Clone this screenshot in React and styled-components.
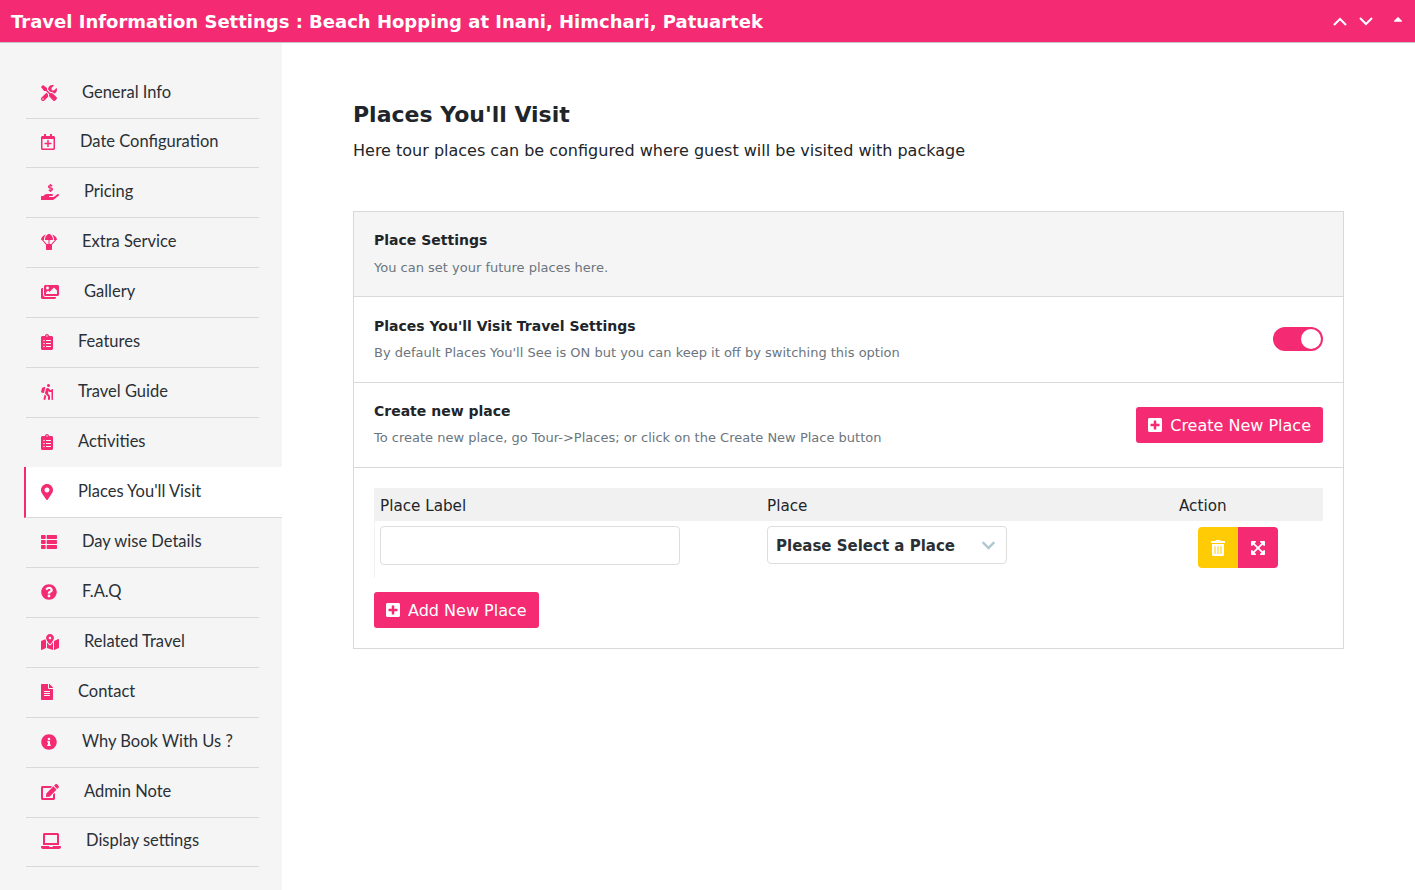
import React from "react";
import styled, { createGlobalStyle } from "styled-components";
import {
  FaTools,
  FaRegCalendarPlus,
  FaHandHoldingUsd,
  FaParachuteBox,
  FaImages,
  FaClipboardList,
  FaHiking,
  FaMapMarkerAlt,
  FaThList,
  FaQuestionCircle,
  FaMapMarkedAlt,
  FaFileAlt,
  FaInfoCircle,
  FaEdit,
  FaLaptop,
  FaPlusSquare,
  FaTrashAlt,
  FaExpandArrowsAlt,
  FaChevronDown,
  FaCaretUp,
} from "react-icons/fa";

const menu = [
  { label: "General Info", icon: FaTools, width: 16 },
  { label: "Date Configuration", icon: FaRegCalendarPlus, width: 14, short: true },
  { label: "Pricing", icon: FaHandHoldingUsd, width: 18 },
  { label: "Extra Service", icon: FaParachuteBox, width: 16 },
  { label: "Gallery", icon: FaImages, width: 18 },
  { label: "Features", icon: FaClipboardList, width: 12 },
  { label: "Travel Guide", icon: FaHiking, width: 12 },
  { label: "Activities", icon: FaClipboardList, width: 12 },
  { label: "Places You'll Visit", icon: FaMapMarkerAlt, width: 12, active: true },
  { label: "Day wise Details", icon: FaThList, width: 16 },
  { label: "F.A.Q", icon: FaQuestionCircle, width: 16 },
  { label: "Related Travel", icon: FaMapMarkedAlt, width: 18 },
  { label: "Contact", icon: FaFileAlt, width: 12 },
  { label: "Why Book With Us ?", icon: FaInfoCircle, width: 16 },
  { label: "Admin Note", icon: FaEdit, width: 18 },
  { label: "Display settings", icon: FaLaptop, width: 20, short: true },
];

function Chevron({ up }) {
  return (
    <svg width="14" height="9" viewBox="0 0 14 9">
      <polyline
        points={up ? "1,8 7,2 13,8" : "1,1 7,7 13,1"}
        fill="none"
        stroke="#fff"
        strokeWidth="2"
      />
    </svg>
  );
}

function App() {
  return (
    <>
      <GlobalStyle />
      <Header>
        <HeaderTitle>
          Travel Information Settings : Beach Hopping at Inani, Himchari, Patuartek
        </HeaderTitle>
        <HeaderActions>
          <Chevron up />
          <Chevron />
          <CaretWrap>
            <FaCaretUp />
          </CaretWrap>
        </HeaderActions>
      </Header>
      <Body>
        <Sidebar>
          {menu.map((item) => {
            const Icon = item.icon;
            return (
              <MenuItem key={item.label} $active={item.active} $short={item.short}>
                <MenuIcon $width={item.width}>
                  <Icon />
                </MenuIcon>
                {item.label}
              </MenuItem>
            );
          })}
        </Sidebar>
        <Main>
          <Title>Places You'll Visit</Title>
          <Subtitle>
            Here tour places can be configured where guest will be visited with package
          </Subtitle>
          <Card>
            <CardHead>
              <RowTitle>Place Settings</RowTitle>
              <RowText>You can set your future places here.</RowText>
            </CardHead>
            <CardRow>
              <div>
                <RowTitle>Places You'll Visit Travel Settings</RowTitle>
                <RowText>
                  By default Places You'll See is ON but you can keep it off by switching this
                  option
                </RowText>
              </div>
              <Toggle>
                <Knob />
              </Toggle>
            </CardRow>
            <CardRow>
              <RowCopy>
                <RowTitle>Create new place</RowTitle>
                <RowText>
                  To create new place, go Tour-&gt;Places; or click on the Create New Place button
                </RowText>
              </RowCopy>
              <PinkButton>
                <FaPlusSquare />
                Create New Place
              </PinkButton>
            </CardRow>
            <TableSection>
              <TableHead>
                <HeadCell>Place Label</HeadCell>
                <HeadCell>Place</HeadCell>
                <HeadCell>Action</HeadCell>
              </TableHead>
              <TableRow>
                <LabelCell>
                  <TextInput />
                </LabelCell>
                <PlaceCell>
                  <SelectBox>
                    Please Select a Place
                    <FaChevronDown />
                  </SelectBox>
                </PlaceCell>
                <ActionCell>
                  <DeleteButton>
                    <FaTrashAlt />
                  </DeleteButton>
                  <ExpandButton>
                    <FaExpandArrowsAlt />
                  </ExpandButton>
                </ActionCell>
              </TableRow>
              <PinkButton>
                <FaPlusSquare />
                Add New Place
              </PinkButton>
            </TableSection>
          </Card>
        </Main>
      </Body>
    </>
  );
}

const pink = "#f42a72";

const GlobalStyle = createGlobalStyle`
  body {
    margin: 0;
    font-family: "DejaVu Sans", sans-serif;
    color: #212529;
    background: #fff;
  }
`;

const Header = styled.div`
  height: 42px;
  background: ${pink};
  border-bottom: 1px solid #c4c4c4;
  display: flex;
  align-items: center;
  justify-content: space-between;
  padding: 0 10px 0 11px;
`;

const HeaderTitle = styled.div`
  color: #fff;
  font-size: 18px;
  font-weight: 700;
`;

const HeaderActions = styled.div`
  display: flex;
  align-items: center;
  gap: 12px;
`;

const CaretWrap = styled.span`
  display: flex;
  color: #fff;
  font-size: 14px;
  margin-left: 6px;
  margin-top: -4px;
`;

const Body = styled.div`
  display: flex;
  min-height: 847px;
`;

const Sidebar = styled.div`
  width: 282px;
  flex: none;
  background: #f5f5f5;
  padding-top: 26px;
  box-sizing: border-box;
`;

const MenuItem = styled.div`
  height: ${(p) => (p.$active ? 51 : p.$short ? 49 : 50)}px;
  box-sizing: border-box;
  display: flex;
  align-items: center;
  font-family: "Lato", sans-serif;
  font-size: 16.5px;
  color: #2b3035;
  margin-top: ${(p) => (p.$active ? -1 : 0)}px;
  margin-left: ${(p) => (p.$active ? 24 : 26)}px;
  margin-right: ${(p) => (p.$active ? 0 : 23)}px;
  padding-left: 15px;
  padding-bottom: ${(p) => (p.$short ? 4 : 3)}px;
  border-bottom: 1px solid #d9d9d9;
  border-left: ${(p) => (p.$active ? `2px solid ${pink}` : "0")};
  background: ${(p) => (p.$active ? "#fff" : "transparent")};
`;

const MenuIcon = styled.span`
  display: flex;
  color: ${pink};
  margin-right: 25px;
  margin-top: 2px;

  svg {
    height: 16px;
    width: ${(p) => p.$width}px;
  }
`;

const Main = styled.div`
  flex: 1;
  padding: 57px 71px 0;
  min-width: 0;
`;

const Title = styled.h2`
  margin: 0;
  font-size: 22px;
  line-height: 30px;
  font-weight: 700;
  color: #212529;
`;

const Subtitle = styled.p`
  margin: 9px 0 48px;
  font-size: 16px;
  line-height: 24px;
  color: #212529;
`;

const Card = styled.div`
  border: 1px solid #d9d9d9;
`;

const CardHead = styled.div`
  background: #f5f5f5;
  padding: 18px 20px 20px;
  height: 85px;
  box-sizing: border-box;
  border-bottom: 1px solid #d9d9d9;

  > div + div {
    margin-top: 8px;
  }
`;

const CardRow = styled.div`
  height: 86px;
  box-sizing: border-box;
  padding: 0 20px;
  display: flex;
  align-items: center;
  justify-content: space-between;
  border-bottom: 1px solid #d9d9d9;

  & + & {
    height: 85px;
  }
`;

const RowCopy = styled.div`
  margin-top: -2px;
`;

const RowTitle = styled.div`
  font-size: 14px;
  font-weight: 700;
  line-height: 20px;
  color: #212529;
`;

const RowText = styled.div`
  font-size: 13px;
  line-height: 20px;
  margin-top: 7px;
  color: #6c757d;
`;

const Toggle = styled.div`
  width: 50px;
  height: 24px;
  margin-top: -2px;
  border-radius: 12px;
  background: ${pink};
  display: flex;
  align-items: center;
  justify-content: flex-end;
  padding-right: 2px;
  box-sizing: border-box;
`;

const Knob = styled.div`
  width: 20px;
  height: 20px;
  border-radius: 50%;
  background: #fff;
`;

const PinkButton = styled.div`
  display: inline-flex;
  align-items: center;
  gap: 7px;
  height: 36px;
  padding: 0 12px 0 11px;
  box-sizing: border-box;
  background: ${pink};
  color: #fff;
  font-size: 16px;
  border-radius: 3px;

  svg {
    font-size: 16px;
  }
`;

const TableSection = styled.div`
  padding: 20px;
  height: 180px;
  box-sizing: border-box;
`;

const columns = "387px 412px 150px";

const TableHead = styled.div`
  display: grid;
  grid-template-columns: ${columns};
  height: 33px;
  background: #f1f1f1;
  align-items: center;
`;

const HeadCell = styled.div`
  padding: 2px 0 0 6px;
  font-size: 15.2px;
  color: #212529;
`;

const TableRow = styled.div`
  display: grid;
  grid-template-columns: ${columns};
  height: 57px;
  margin-bottom: 14px;
`;

const LabelCell = styled.div`
  padding: 5px 0 0 5px;
  border-left: 1px solid #f1f1f1;
`;

const TextInput = styled.input`
  display: block;
  width: 300px;
  height: 39px;
  box-sizing: border-box;
  border: 1px solid #ddd;
  border-radius: 4px;
  background: #fff;
`;

const PlaceCell = styled.div`
  padding: 5px 0 0 6px;
`;

const SelectBox = styled.div`
  width: 240px;
  height: 38px;
  box-sizing: border-box;
  border: 1px solid #ddd;
  border-radius: 4px;
  display: flex;
  align-items: center;
  justify-content: space-between;
  padding: 1px 10px 0 8px;
  font-size: 15px;
  font-weight: 700;
  color: #2b3035;

  svg {
    font-size: 15px;
    color: #afc7d2;
  }
`;

const ActionCell = styled.div`
  display: flex;
  align-items: flex-start;
  padding: 6px 0 0 25px;
`;

const DeleteButton = styled.div`
  width: 40px;
  height: 41px;
  display: flex;
  align-items: center;
  justify-content: center;
  background: #ffcb05;
  color: #fff;
  font-size: 16px;
  border-radius: 4px 0 0 4px;
`;

const ExpandButton = styled(DeleteButton)`
  background: ${pink};
  border-radius: 0 4px 4px 0;
`;

export default App;
